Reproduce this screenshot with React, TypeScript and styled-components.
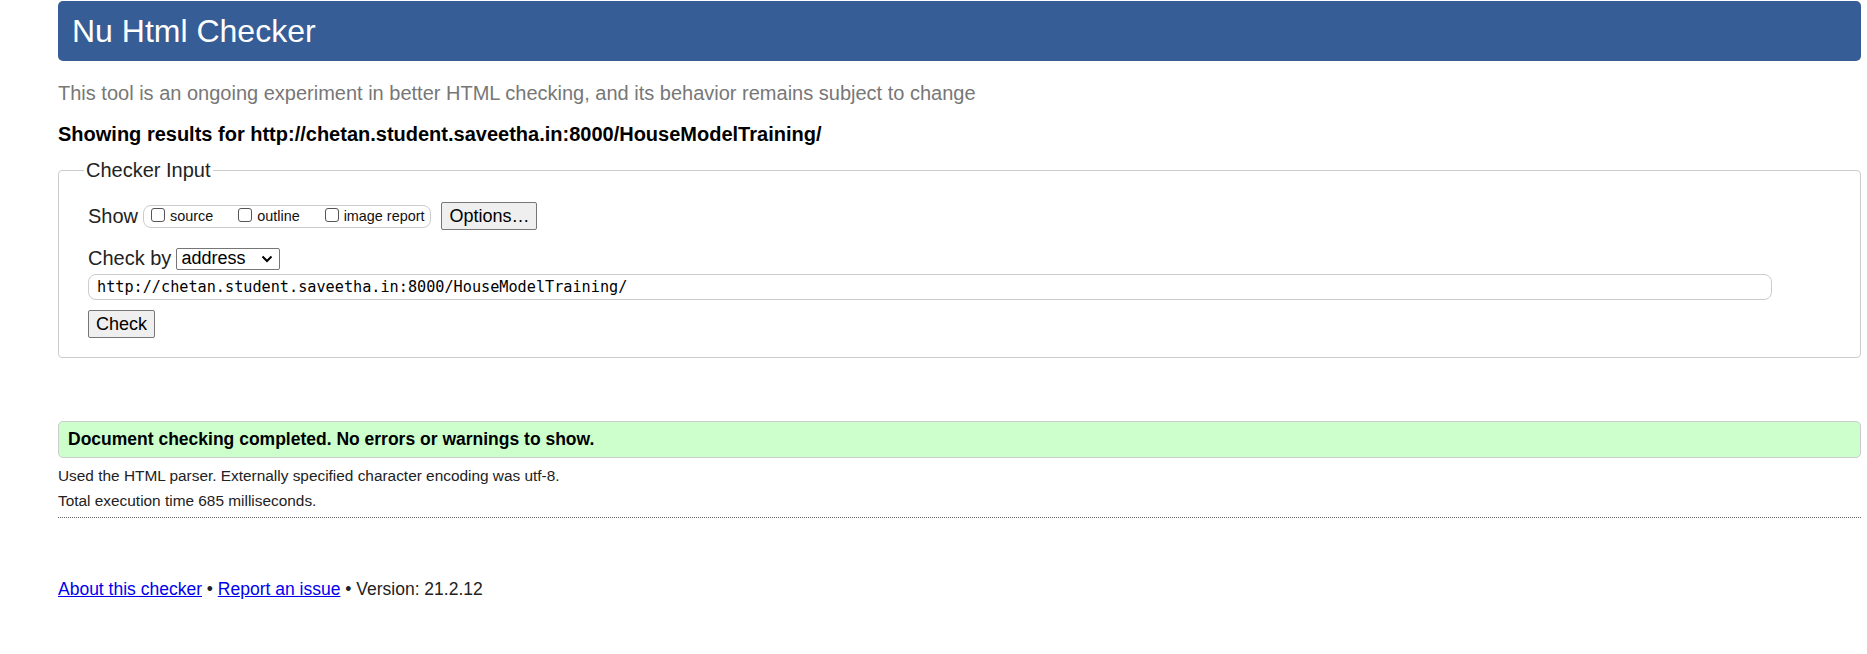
import React from "react";
import styled, { createGlobalStyle } from "styled-components";

const Global = createGlobalStyle`
  html, body { margin: 0; padding: 0; background: #fff; }
  body { font-family: "Liberation Sans", Arial, sans-serif; color: #000; }
`;

const Page = styled.div`
  padding: 1px 6px 40px 58px;
`;

const Header = styled.header`
  height: 60px;
  background: #365d95;
  border-radius: 5px;
  display: flex;
  align-items: center;
  padding-left: 14px;
`;

const Title = styled.h1`
  margin: 0;
  font-size: 32px;
  font-weight: normal;
  color: #fff;
  line-height: 1;
`;

const Intro = styled.p`
  margin: 20px 0 0;
  font-size: 20px;
  line-height: 24px;
  color: #777;
`;

const ResultsFor = styled.h2`
  margin: 17px 0 0;
  font-size: 20px;
  line-height: 24px;
  font-weight: bold;
  color: #000;
`;

const Fieldset = styled.fieldset`
  margin: 13px 0 0;
  padding: 20px 12px 19px 29px;
  border: 1px solid #ccc;
  border-radius: 4px;
  min-width: 0;
`;

const Legend = styled.legend`
  padding: 0 2px;
  margin-left: -4px;
  font-size: 20px;
  color: #222;
`;

const Row = styled.div<{ $mt?: number }>`
  display: flex;
  align-items: center;
  margin-top: ${(p) => p.$mt ?? 0}px;
`;

const Label = styled.span`
  font-size: 20px;
  color: #222;
  margin-right: 5px;
`;

const Group = styled.div`
  display: flex;
  align-items: center;
  height: 21px;
  border: 1px solid #ccc;
  border-radius: 8px;
  padding: 0 6px 0 7px;
  margin-right: 10px;
`;

const CheckLabel = styled.label<{ $last?: boolean }>`
  display: flex;
  align-items: center;
  font-size: 14.4px;
  color: #111;
  margin-right: ${(p) => (p.$last ? 0 : 25)}px;
`;

const Box = styled.input`
  width: 14px;
  height: 14px;
  margin: 0 5px 2px 0;
  appearance: none;
  border: 1px solid #555;
  border-radius: 3px;
  background: #fff;
`;

const Button = styled.button`
  font-family: "Liberation Sans", Arial, sans-serif;
  font-size: 18px;
  color: #000;
  height: 28px;
  padding: 0 7px;
  background: #efefef;
  border: 1px solid #767676;
  border-radius: 2px;
`;

const Select = styled.div`
  display: flex;
  align-items: center;
  justify-content: space-between;
  width: 104px;
  height: 22px;
  box-sizing: border-box;
  border: 1px solid #767676;
  border-radius: 2px;
  padding: 0 6px 0 4px;
  font-size: 18px;
  color: #000;
`;

const UrlInput = styled.div`
  box-sizing: border-box;
  width: calc(100% - 76px);
  height: 26px;
  border: 1px solid #ccc;
  border-radius: 8px;
  padding: 0 8px;
  display: flex;
  align-items: center;
  font-family: "DejaVu Sans Mono", "Liberation Mono", monospace;
  font-size: 15.2px;
  color: #000;
`;

const Success = styled.div`
  margin-top: 63px;
  height: 37px;
  box-sizing: border-box;
  background: #ccffcc;
  border: 1px solid #ccc;
  border-radius: 5px;
  display: flex;
  align-items: center;
  padding-left: 9px;
  font-size: 17.5px;
  font-weight: bold;
  color: #000;
`;

const Details = styled.div`
  font-size: 15.4px;
  color: #222;
  line-height: 25px;
  margin-top: 5px;
  padding-bottom: 4px;
  border-bottom: 1px dotted #666;
`;

const Footer = styled.p`
  margin: 61px 0 0;
  font-size: 17.5px;
  color: #222;
`;

const Link = styled.a`
  color: #0000ee;
  text-decoration: underline;
`;

export default function App() {
  return (
    <>
      <Global />
      <Page>
        <Header>
          <Title>Nu Html Checker</Title>
        </Header>
        <Intro>
          This tool is an ongoing experiment in better HTML checking, and its behavior remains subject to change
        </Intro>
        <ResultsFor>Showing results for http://chetan.student.saveetha.in:8000/HouseModelTraining/</ResultsFor>
        <Fieldset>
          <Legend>Checker Input</Legend>
          <Row>
            <Label>Show</Label>
            <Group>
              <CheckLabel>
                <Box type="checkbox" />
                source
              </CheckLabel>
              <CheckLabel>
                <Box type="checkbox" />
                outline
              </CheckLabel>
              <CheckLabel $last>
                <Box type="checkbox" />
                image report
              </CheckLabel>
            </Group>
            <Button>Options…</Button>
          </Row>
          <Row $mt={17}>
            <Label>Check by</Label>
            <Select>
              <span>address</span>
              <svg width="12" height="8" viewBox="0 0 12 8">
                <path d="M1.5 1.5 L6 6 L10.5 1.5" fill="none" stroke="#000" strokeWidth="2" />
              </svg>
            </Select>
          </Row>
          <Row $mt={4}>
            <UrlInput>http://chetan.student.saveetha.in:8000/HouseModelTraining/</UrlInput>
          </Row>
          <Row $mt={10}>
            <Button>Check</Button>
          </Row>
        </Fieldset>
        <Success>Document checking completed. No errors or warnings to show.</Success>
        <Details>
          <div>Used the HTML parser. Externally specified character encoding was utf-8.</div>
          <div>Total execution time 685 milliseconds.</div>
        </Details>
        <Footer>
          <Link href="#">About this checker</Link> • <Link href="#">Report an issue</Link> • Version: 21.2.12
        </Footer>
      </Page>
    </>
  );
}
